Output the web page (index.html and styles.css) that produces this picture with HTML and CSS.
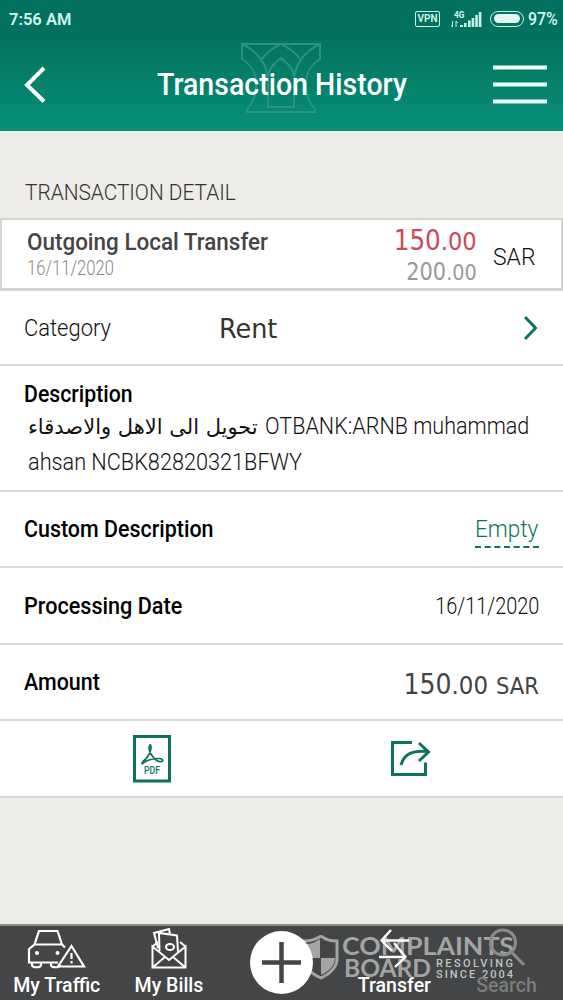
FILE: index.html
```html
<!DOCTYPE html>
<html lang="en">
<head>
<meta charset="utf-8">
<title>Transaction History</title>
<link rel="stylesheet" href="styles.css">
</head>
<body>
<div class="screen">
  <header class="header">
    <div class="status">
      <span class="clock">7:56 AM</span>
      <div class="status-icons">
        <span class="vpn">VPN</span>
        <svg class="signal" width="31" height="18" viewBox="0 0 31 18">
          <text class="signal-text" x="3" y="7.5" textLength="10.5" lengthAdjust="spacingAndGlyphs">4G</text>
          <path d="M1.5 11v6M0 15l1.5 2M5 17v-6l1.5 2" fill="none" stroke="#c8f3e9" stroke-width="1"/>
          <path d="M9 15h3v2H9zM13 13h2.6v4H13zM17 10.5h2.6V17H17zM20.600 8h2.600v9h-2.600zM24.200 5h2.600v12h-2.600zM27.800 2h2.600v15h-2.600z" fill="#c8f3e9"/>
        </svg>
        <span class="battery"><span class="battery-level"></span></span>
        <span class="percent"><span class="fit percent-text">97%</span></span>
      </div>
    </div>
    <div class="titlebar">
      <svg width="24" height="38" viewBox="0 0 24 38"><path d="M22 2 5 19l17 16.500" fill="none" stroke="#fff" stroke-width="4"/></svg>
      <div class="title-wrap">
        <svg class="emblem" width="82" height="72" viewBox="0 0 82 72" fill="none" stroke="#2a9480" stroke-width="2">
          <path d="M2 2h78v15C69 24 66 32 66 42c0 12 3 19 9 25v3H7v-3c6-6 9-13 9-25 0-10-3-18-14-25z"/>
          <path d="M2 2c17 8 26 22 26 38M80 2C63 10 54 24 54 40"/>
          <path d="M22 17C27 9 34 6 41 2c7 4 14 7 19 15"/>
          <path d="M28 65V36c0-9 6-14 13-20 7 6 13 11 13 20v29z"/>
        </svg>
        <h1 class="title"><span class="fit fit-title">Transaction History</span></h1>
      </div>
      <svg width="54" height="40" viewBox="0 0 54 40"><path d="M0 2.500h54M0 19.500h54M0 36.500h54" stroke="#e9fffb" stroke-width="4"/></svg>
    </div>
  </header>

  <main>
    <h2 class="section"><span class="fit fit-section">TRANSACTION DETAIL</span></h2>
    <section class="card">
      <div class="card-main">
        <div class="card-name"><span class="fit fit-name">Outgoing Local Transfer</span></div>
        <div class="card-date"><span class="fit fit-date">16/11/2020</span></div>
      </div>
      <div class="card-sums">
        <div class="sum"><span class="fit fit-sum">150<small>.00</small></span></div>
        <div class="balance"><span class="fit fit-balance">200<small>.00</small></span></div>
      </div>
      <div class="currency"><span class="fit fit-currency">SAR</span></div>
    </section>
    <section class="rows">
      <div class="row">
        <div class="row-label light"><span class="fit fit-category">Category</span></div>
        <div class="rent"><span class="fit fit-rent">Rent</span></div>
        <svg class="chevron" width="15" height="26" viewBox="0 0 15 26"><path d="M1 1l10.500 11L1 23" fill="none" stroke="#0d7260" stroke-width="3"/></svg>
      </div>
      <div class="row row-text">
        <div class="strong"><span class="fit fit-description">Description</span></div>
        <div class="text-line"><span class="arabic"><span class="fit fit-arabic" dir="rtl">تحويل الى الاهل والاصدقاء</span></span><span class="fit fit-bank">OTBANK:ARNB muhammad</span></div>
        <div class="text-line"><span class="fit fit-ref">ahsan NCBK82820321BFWY</span></div>
      </div>
      <div class="row">
        <div class="strong"><span class="fit fit-custom">Custom Description</span></div>
        <div class="empty"><span class="fit fit-empty">Empty</span></div>
      </div>
      <div class="row">
        <div class="strong"><span class="fit fit-processing">Processing Date</span></div>
        <div class="value"><span class="fit fit-value">16/11/2020</span></div>
      </div>
      <div class="row">
        <div class="strong"><span class="fit fit-amount">Amount</span></div>
        <div class="amount"><span class="fit fit-total">150<small>.00</small> <small class="unit">SAR</small></span></div>
      </div>
      <div class="row actions">
        <svg width="38" height="48" viewBox="0 0 38 48" fill="none" stroke="#0d7260">
          <rect x="1.500" y="1.500" width="35" height="44.500" stroke-width="3"/>
          <path d="M17 10c-2 3 0 8 3 12 3 4 6 5 9 4.500 2-1 0-3-3-3-6 0-12 2-15 4-3 3-2 0-1-1 4-3 7-8 8-13 0-2 0-4-1-3.500z" stroke-width="1.700"/>
          <text class="pdf" x="11" y="39" textLength="16" lengthAdjust="spacingAndGlyphs">PDF</text>
        </svg>
        <svg width="42" height="38" viewBox="0 0 42 38" fill="none" stroke="#0d7260" stroke-width="3">
          <path d="M22 2.500H2.500v32h33V22.500"/><path d="M11 25C14 14 22 10 38 11.500M29 3l9.500 9L29 21"/>
        </svg>
      </div>
    </section>
  </main>

  <nav class="nav">
    <svg class="watermark" width="225" height="50" viewBox="0 0 225 50">
      <path d="M20 1c-6 4-12 5-17 5v18c0 9 8 15 17 19 8-4 16-10 16-19V6C30 6 25 5 20 1z" fill="none" stroke="#a3a4a4" stroke-width="3"/>
      <path d="M19 4v19H5V9c5 0 10-2 14-5zM20 23h14c0 8-6 13-14 17z" fill="#a3a4a4"/>
      <text class="mark" x="41" y="20" textLength="172" lengthAdjust="spacingAndGlyphs">COMPLAINTS</text>
      <text class="mark" x="43" y="42" textLength="87" lengthAdjust="spacingAndGlyphs">BOARD</text>
      <text class="mark-small" x="135" y="32" textLength="77">RESOLVING</text>
      <text class="mark-small" x="135" y="43" textLength="77">SINCE 2004</text>
    </svg>
    <div class="tab">
      <svg width="59" height="41" viewBox="0 0 59 41" fill="none" stroke="#fff" stroke-width="2.200">
        <path d="M31 34.500H2V21l5.500-4.500L12 3h18.500l4.500 13.500 3 3M7.500 16.500H35M5 35v2c0 3 9 3 9 0v-2M24 35v2c0 3 9 3 9 0"/>
        <path d="M44.500 18 31 38.500h26z"/><path d="M44.500 25v6M44.500 33v2.500"/>
        <circle cx="10" cy="25" r="2" fill="#fff" stroke="none"/><circle cx="30.500" cy="25" r="2" fill="#fff" stroke="none"/>
      </svg>
      <span class="tab-label"><span class="fit fit-traffic">My Traffic</span></span>
    </div>
    <div class="tab tab-bills">
      <svg width="36" height="41" viewBox="0 0 36 41" fill="none" stroke="#fff" stroke-width="2">
        <path d="M1.500 18.500v21h33v-21L18 32zM1.500 39.500 14 29M34.500 39.500 22 29M1.500 18.500 7 14M34.500 18.500 29 14"/>
        <path d="M8.500 23 8 5l18 2.500L27 24M7 20 3 5l15-4 1 5"/><ellipse cx="19" cy="19" rx="4" ry="3"/>
      </svg>
      <span class="tab-label"><span class="fit fit-bills">My Bills</span></span>
    </div>
    <div class="tab tab-add">
      <svg width="63" height="63" viewBox="0 0 63 63"><circle cx="31.500" cy="31.500" r="31.500" fill="#fff"/><path d="M12 31.500h39M31.500 11v41" stroke="#434546" stroke-width="4.500"/></svg>
    </div>
    <div class="tab">
      <svg width="34" height="41" viewBox="0 0 34 41" fill="none" stroke="#fff" stroke-width="2.400"><path d="M32 12.500H4.500M14 2 4.500 12.500 15 23M2 29h26M17 15l11.500 14L18 39"/></svg>
      <span class="tab-label"><span class="fit fit-transfer">Transfer</span></span>
    </div>
    <div class="tab tab-search">
      <svg width="38" height="41" viewBox="0 0 38 41" fill="none" stroke="#8a8b8b" stroke-width="3"><circle cx="15" cy="14.500" r="12.500"/><path d="m24 24.500 12 12.500"/></svg>
      <span class="tab-label"><span class="fit fit-search">Search</span></span>
    </div>
  </nav>
</div>
</body>
</html>
```
FILE: styles.css
```css
* { box-sizing: border-box; }
body { margin: 0; font-family: Roboto, "Liberation Sans", sans-serif; }
h1, h2 { margin: 0; font-weight: inherit; font-size: inherit; }
svg { display: block; flex: none; }
.screen { width: 563px; height: 1000px; display: flex; flex-direction: column; background: #edece8; overflow: hidden; }
.fit { display: inline-block; white-space: nowrap; transform-origin: left center; }

/* Header */
.header { height: 131px; background: linear-gradient(#02705d 0%, #02725f 25%, #058069 62%, #089079 100%); }
.status { height: 38px; display: flex; align-items: center; justify-content: space-between; padding: 0 4px 0 9px; color: #d5f7ef; }
.clock { font-size: 16.500px; font-weight: 600; }
.status-icons { display: flex; align-items: center; }
.vpn { width: 25px; height: 16px; border: 1.500px solid #c8f3e9; border-radius: 2px; font-size: 10px; line-height: 14px; font-weight: 600; text-align: center; }
.signal { margin-left: 11px; }
.signal-text { font: 700 9px Roboto, sans-serif; fill: #d5f7ef; }
.battery { width: 34px; height: 16px; margin-left: 8px; border: 1.500px solid #c8f3e9; border-radius: 8px; padding: 2px 3px; }
.battery-level { display: block; height: 9px; border-radius: 5px; background: #e6f5f1; }
.percent { width: 31px; margin-left: 4px; font-size: 17.500px; font-weight: 500; }
.percent-text { transform: scaleX(.91); }
.titlebar { height: 93px; display: flex; align-items: center; padding: 0 16px 0 22px; justify-content: space-between; }
.title-wrap { position: relative; width: 250px; margin-left: 24px; }
.emblem { position: absolute; left: 83px; top: -25px; }
.title { position: relative; font-size: 31px; line-height: 36px; font-weight: 500; color: #fff; }
.fit-title { transform: scaleX(.92); }

/* Summary card */
.section { height: 87px; padding: 48px 0 0 25px; font-size: 22px; line-height: 27px; font-weight: 300; color: #333; }
.card { height: 73px; display: flex; background: #fff; border: 2px solid #d3d3d3; border-bottom-width: 3px; padding: 8px 0 0 25px; }
.card-main { width: 340px; }
.card-name { font-size: 24px; line-height: 29px; font-weight: 500; color: #444; }
.card-date { font-size: 20px; line-height: 23px; font-weight: 300; color: #888; }
.card-sums { width: 110px; text-align: right; font-family: "DejaVu Sans Condensed", "DejaVu Sans", sans-serif; }
.card-sums .fit { transform-origin: right center; }
.sum { font-size: 28px; line-height: 28px; color: #c84b5a; margin-top: -1px; }
.sum small { font-size: 25.500px; }
.balance { font-size: 24px; line-height: 35px; color: #999; }
.balance small { font-size: 22px; }
.currency { padding-left: 16px; font-size: 24px; line-height: 58px; color: #111; font-weight: 300; }
.fit-section { transform: scaleX(.946); }
.fit-name { transform: scaleX(.935); }
.fit-date { transform: scaleX(.83); }
.fit-sum { transform: scaleX(.98); }
.fit-balance { transform: scaleX(.97); }
.fit-currency { transform: scaleX(.955); }

/* Detail rows */
.rows { background: #fff; }
.row { height: 76.600px; display: flex; align-items: center; justify-content: space-between; padding: 2px 24px 0; border-bottom: 2px solid #d9d9d9; font-size: 23px; color: #111; }
.row:first-child { height: 75px; }
.row-label { width: 195px; font-weight: 300; }
.rent { flex: 1; font-family: "DejaVu Sans Condensed", "DejaVu Sans", sans-serif; font-size: 26.500px; color: #333; }
.strong { font-weight: 500; color: #000; }
.row-text { display: block; height: 125.500px; padding-top: 15px; }
.row-text .strong { line-height: 28px; }
.text-line { display: flex; padding-left: 4px; line-height: 36px; font-weight: 300; }
.arabic { flex: none; width: 237px; font-family: "DejaVu Sans", sans-serif; font-size: 21px; font-weight: 400; }
.empty { font-weight: 300; color: #0d7260; width: 64px; border-bottom: 2px dashed #0d7260; line-height: 32px; padding-top: 2px; }
.value { font-weight: 300; }
.value .fit, .amount .fit { transform-origin: right center; }
.amount { padding-top: 3px; font-family: "DejaVu Sans Condensed", "DejaVu Sans", sans-serif; font-size: 28px; color: #444; }
.amount small { font-size: 25.500px; }
.amount .unit { font-size: 23.500px; }
.actions { padding: 0 131px 0 133px; }
.pdf { font: 500 10px Roboto, sans-serif; fill: #0d7260; stroke: none; }
.fit-category { transform: scaleX(.955); }
.fit-rent { transform: scaleX(1.07); }
.fit-description { transform: scaleX(.925); }
.fit-bank { transform: scaleX(.937); }
.fit-ref { transform: scaleX(.943); }
.fit-custom, .fit-amount { transform: scaleX(.932); }
.fit-processing { transform: scaleX(.94); }
.fit-value { transform: scaleX(.866); }
.fit-empty { transform: scaleX(.98); }

/* Bottom navigation */
.nav { position: relative; margin-top: auto; height: 76px; display: grid; grid-template-columns: repeat(5, 1fr); background: #434546; border-top: 2px solid #8b8c8b; }
.watermark { position: absolute; left: 301px; top: 9px; }
.mark { font: 700 25px Lato, sans-serif; fill: #a3a4a4; }
.mark-small { font: 500 11px Roboto, sans-serif; fill: #c2c3c3; }
.tab { position: relative; display: flex; flex-direction: column; align-items: center; padding-top: 2px; }
.tab-label { font-size: 21px; line-height: 32px; font-weight: 500; color: #fff; }
.tab-label .fit { transform: scaleX(.93); transform-origin: center; }
.tab-add { padding-top: 5px; }
.tab-search .tab-label { color: #7b7c7c; }
```
